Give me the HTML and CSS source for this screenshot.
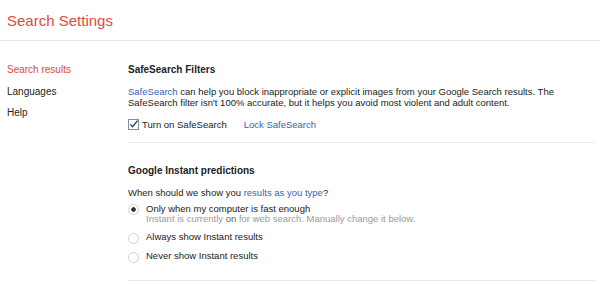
FILE: index.html
```html
<!DOCTYPE html>
<html>
<head>
    <title>Search Settings</title>
    <link rel="stylesheet" href="styles.css">
</head>
<body>
    <div class="header">
        <h1>Search Settings</h1>
    </div>
    <div class="page">
        <ul class="nav">
            <li class="active">Search results</li>
            <li>Languages</li>
            <li>Help</li>
        </ul>
        <div class="content">
            <div class="section">
                <h2>SafeSearch Filters</h2>
                <p class="intro"><a href="#">SafeSearch</a> can help you block inappropriate or explicit images from your Google Search results. The<br>SafeSearch filter isn't 100% accurate, but it helps you avoid most violent and adult content.</p>
                <div class="check-row">
                    <span class="checkbox">
                        <svg width="11" height="11" viewBox="0 0 11 11"><rect x="0.5" y="0.5" width="10" height="10" fill="#fff" stroke="#7d8fb0"/><path d="M2.3 5.4 L4.5 7.8 L9.6 1.6" fill="none" stroke="#2c3e6a" stroke-width="1.4"/></svg>
                    </span>
                    <span>Turn on SafeSearch</span>
                    <a href="#" class="lock">Lock SafeSearch</a>
                </div>
            </div>
            <div class="section">
                <h2>Google Instant predictions</h2>
                <p>When should we show you <a href="#">results as you type</a>?</p>
                <div class="radio-row">
                    <span class="radio checked"></span>
                    <div>
                        <div>Only when my computer is fast enough</div>
                        <div class="note">Instant is currently <b>on</b> for web search. Manually change it below.</div>
                    </div>
                </div>
                <div class="radio-row">
                    <span class="radio"></span>
                    <div>Always show Instant results</div>
                </div>
                <div class="radio-row">
                    <span class="radio"></span>
                    <div>Never show Instant results</div>
                </div>
            </div>
        </div>
    </div>
</body>
</html>
```

FILE: styles.css
```css
body {
    font-family: "Liberation Sans", Arial, sans-serif;
    font-size: 9.5px;
    color: #222;
    margin: 0;
    padding: 0;
    background-color: #fff;
}

a {
    color: #3562b5;
    text-decoration: none;
}

.header {
    height: 40px;
    border-bottom: 1px solid #e5e5e5;
}

.header h1 {
    margin: 0;
    padding: 12px 0 0 7px;
    font-size: 15px;
    font-weight: normal;
    color: #dd4b39;
}

.page {
    display: flex;
}

.nav {
    list-style: none;
    margin: 0;
    padding: 23px 0 0 7px;
    width: 121px;
    font-size: 10px;
}

.nav li {
    height: 21.5px;
    line-height: 12px;
}

.nav li.active {
    color: #dd4b39;
}

.content {
    width: 467px;
}

.section {
    border-bottom: 1px solid #ebebeb;
    padding: 23px 0 12px;
}

.section + .section {
    padding-top: 22px;
    padding-bottom: 17px;
}

.section h2 {
    margin: 0 0 10px;
    font-size: 10px;
    line-height: 12px;
    font-weight: bold;
}

.section p {
    margin: 0 0 5px;
    line-height: 11.2px;
}

.section p.intro {
    margin-bottom: 11px;
}

.check-row {
    display: flex;
    align-items: center;
    gap: 2px;
}

.checkbox {
    display: flex;
    margin-right: 1px;
}

.lock {
    margin-left: 15px;
}

.radio-row {
    display: flex;
    align-items: flex-start;
    gap: 7px;
    line-height: 10.5px;
    margin-bottom: 7.5px;
}

.radio-row:last-child {
    margin-bottom: 0;
}

.radio {
    width: 9px;
    height: 9px;
    border: 1px solid #d0d0d0;
    border-radius: 50%;
    margin-top: 0.5px;
    box-sizing: content-box;
    flex-shrink: 0;
}

.radio.checked {
    background: radial-gradient(circle, #333 0 2px, #fff 2.5px);
}

.note {
    color: #9a9a9a;
}

.note b {
    font-weight: normal;
    color: #666;
}
```
